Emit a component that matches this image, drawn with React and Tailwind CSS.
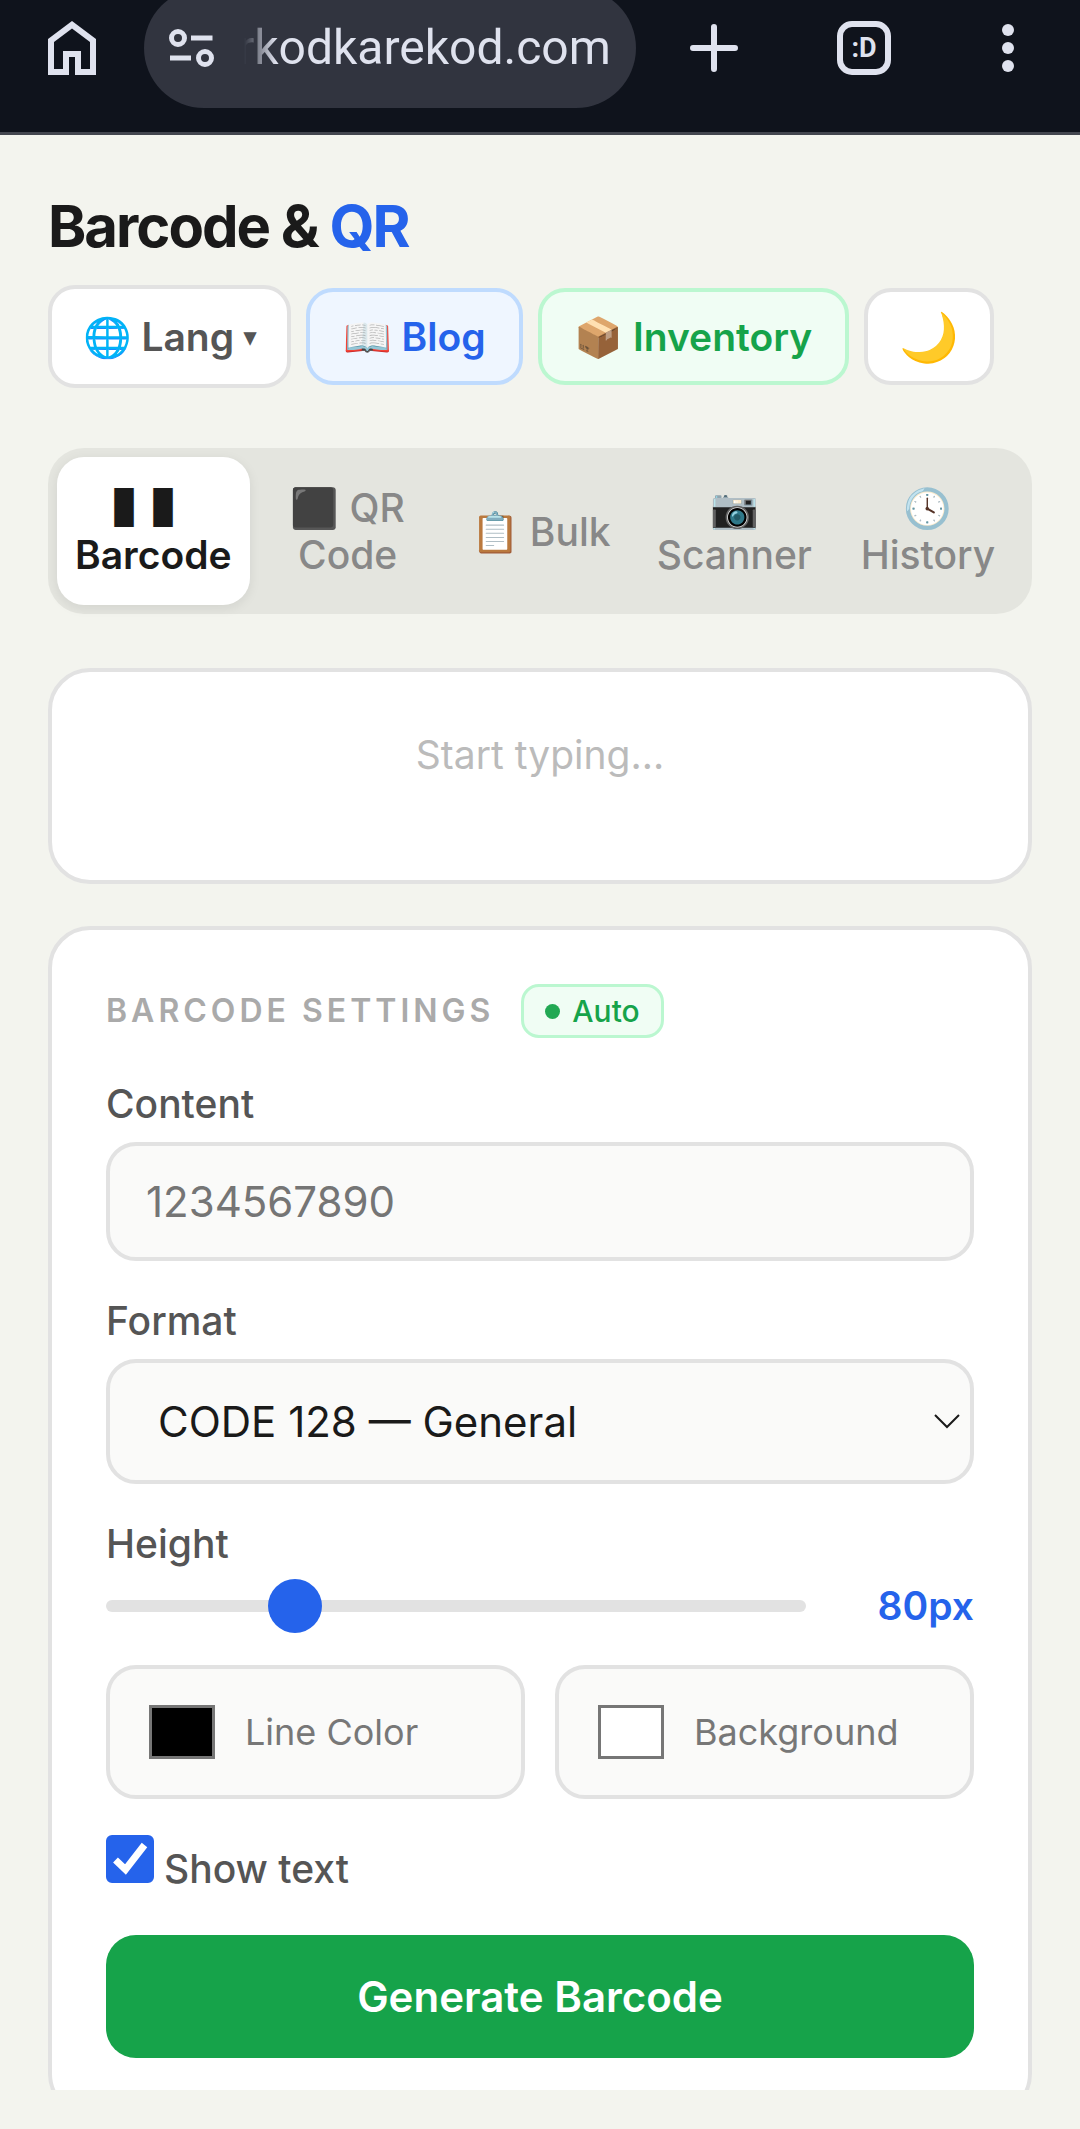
import React, { useState } from 'react';

const BrowserBar = () => (
  <header className="shrink-0 h-[135px] flex items-center pl-12 pr-[66px] pb-9 overflow-hidden bg-[#0f131c] border-b-[3px] border-[#43464f] text-[#dfe2ee]">
    <button type="button" aria-label="Home">
      <svg className="block w-12 h-[54px]" viewBox="0 0 48 54" fill="currentColor" fillRule="evenodd">
        <path d="M0 18L24 0L48 18V54H27V36H21V54H0ZM6 21V48H15V30H33V48H42V21L24 7.5Z" />
      </svg>
    </button>
    <div className="flex flex-1 items-center min-w-0 h-[120px] shrink-0 ml-12 pl-[25px] pr-[26px] rounded-full bg-[#31343f]">
      <svg className="shrink-0 w-[45px] h-[38px]" viewBox="0 0 45 38" fill="none" stroke="currentColor" strokeWidth="5">
        <circle cx="9" cy="9" r="6.5" />
        <path d="M22 9H43.5M1 29H22" />
        <circle cx="36" cy="29" r="6.5" />
      </svg>
      <input
        aria-label="Address"
        readOnly
        value="rkodkarekod.com"
        className="flex-1 min-w-0 ml-6 bg-transparent outline-none text-right text-[48px] leading-[60px] font-[Roboto,sans-serif] [mask-image:linear-gradient(to_right,transparent_6px,black_38px)]"
      />
    </div>
    <button type="button" aria-label="New tab" className="ml-[54px]">
      <svg className="block size-12" viewBox="0 0 48 48" stroke="currentColor" strokeWidth="6" strokeLinecap="round">
        <path d="M24 3V45M3 24H45" />
      </svg>
    </button>
    <button
      type="button"
      className="ml-[99px] size-[54px] flex items-center justify-center border-[6px] border-current rounded-[15px] text-[27px] leading-none font-bold font-[Roboto,sans-serif]"
    >
      :D
    </button>
    <button type="button" aria-label="Menu" className="ml-[111px]">
      <svg className="block w-3 h-12" viewBox="0 0 12 48" fill="currentColor">
        <circle cx="6" cy="6" r="6" />
        <circle cx="6" cy="24" r="6" />
        <circle cx="6" cy="42" r="6" />
      </svg>
    </button>
  </header>
);

const tabs = [
  { id: 'barcode', label: '▌▌ Barcode' },
  { id: 'qr', label: '⬛ QR Code' },
  { id: 'bulk', label: '📋 Bulk' },
  { id: 'scanner', label: '📷 Scanner' },
  { id: 'history', label: '🕓 History' },
];

const Tabs = ({ active, onChange }) => (
  <nav className="mt-[60px] flex gap-[3px] p-[9px] rounded-[36px] bg-[#e4e5df]">
    {tabs.map((tab) => (
      <button
        key={tab.id}
        type="button"
        onClick={() => onChange(tab.id)}
        className={
          tab.id === active
            ? 'flex-1 px-[18px] py-[27px] rounded-[27px] bg-white shadow-[0_3px_12px_rgba(0,0,0,0.08)] text-[39px] leading-[47px] font-semibold text-[#1a1a1a]'
            : 'flex-1 px-[18px] py-[27px] rounded-[27px] text-[39px] leading-[47px] font-medium text-[#888]'
        }
      >
        {tab.label}
      </button>
    ))}
  </nav>
);

const ColorField = ({ id, label, value, onChange }) => (
  <div className="flex flex-1 items-center gap-[30px] h-[134px] px-[39px] border-4 border-[#e2e2e2] rounded-[30px] bg-[#fafaf9]">
    <input
      id={id}
      type="color"
      value={value}
      onChange={(e) => onChange(e.target.value)}
      className="w-[66px] h-[54px] appearance-none bg-transparent [&::-webkit-color-swatch-wrapper]:p-0 [&::-webkit-color-swatch]:border-[3px] [&::-webkit-color-swatch]:border-[#767676] [&::-webkit-color-swatch]:rounded-none"
    />
    <label htmlFor={id} className="text-[36px] leading-[48px] text-[#777]">{label}</label>
  </div>
);

const BarcodeSettings = () => {
  const [content, setContent] = useState('');
  const [format, setFormat] = useState('CODE128');
  const [height, setHeight] = useState(80);
  const [lineColor, setLineColor] = useState('#000000');
  const [background, setBackground] = useState('#ffffff');
  const [showText, setShowText] = useState(true);

  return (
    <section className="mt-[42px] p-[54px] border-4 border-[#e2e2e2] rounded-[42px] bg-white">
      <div className="flex items-center gap-[27px]">
        <h2 className="text-[32px] leading-[48px] font-semibold tracking-[4px] text-[#aaa]">BARCODE SETTINGS</h2>
        <span className="flex items-center gap-3 h-[54px] px-[21px] border-[3px] border-[#bbf7d0] rounded-[18px] bg-[#f0fdf4] text-[30px] font-medium text-[#16a34a]">
          <span className="size-[15px] rounded-full bg-[#22a853]" />
          Auto
        </span>
      </div>

      <label htmlFor="content" className="block mt-[42px] text-[39px] leading-[48px] font-medium text-[#555]">Content</label>
      <input
        id="content"
        type="text"
        placeholder="1234567890"
        value={content}
        onChange={(e) => setContent(e.target.value)}
        className="block w-full h-[119px] mt-3.5 px-9 border-4 border-[#e2e2e2] rounded-[30px] bg-[#fafaf9] text-[42px] text-[#1a1a1a] placeholder:text-[#757575]"
      />

      <label htmlFor="format" className="block mt-9 text-[39px] leading-[48px] font-medium text-[#555]">Format</label>
      <div className="relative mt-3.5">
        <select
          id="format"
          value={format}
          onChange={(e) => setFormat(e.target.value)}
          className="block w-full h-[125px] px-12 border-4 border-[#e2e2e2] rounded-[30px] bg-[#fafaf9] appearance-none text-[42px] text-[#1a1a1a]"
        >
          <option value="CODE128">CODE 128 — General</option>
          <option value="EAN13">EAN-13</option>
          <option value="CODE39">CODE 39</option>
        </select>
        <svg
          className="absolute right-3.5 top-[55px] w-[26px] h-[15px] pointer-events-none"
          viewBox="0 0 26 15"
          fill="none"
          stroke="#1a1a1a"
          strokeWidth="2"
        >
          <path d="M1 1L13 13L25 1" />
        </svg>
      </div>

      <label htmlFor="height" className="block mt-9 text-[39px] leading-[48px] font-medium text-[#555]">Height</label>
      <div className="flex items-center h-[54px] mt-[11px]">
        <input
          id="height"
          type="range"
          min="40"
          max="200"
          value={height}
          onChange={(e) => setHeight(Number(e.target.value))}
          className="flex-1 h-3 appearance-none rounded-full bg-[#e2e2e2] [&::-webkit-slider-thumb]:appearance-none [&::-webkit-slider-thumb]:size-[54px] [&::-webkit-slider-thumb]:rounded-full [&::-webkit-slider-thumb]:bg-[#2563eb]"
        />
        <output htmlFor="height" className="w-[168px] text-right text-[39px] leading-[48px] font-semibold text-[#2563eb]">
          {height}px
        </output>
      </div>

      <div className="flex gap-[30px] mt-8">
        <ColorField id="line-color" label="Line Color" value={lineColor} onChange={setLineColor} />
        <ColorField id="background" label="Background" value={background} onChange={setBackground} />
      </div>

      <div className="flex items-baseline gap-[10px] mt-9">
        <span className="relative flex items-baseline">
          <input
            id="show-text"
            type="checkbox"
            checked={showText}
            onChange={(e) => setShowText(e.target.checked)}
            className="peer size-12 appearance-none rounded-md border-[3px] border-[#767676] bg-white checked:border-[#2563eb] checked:bg-[#2563eb]"
          />
          <svg
            className="absolute inset-0 size-12 hidden peer-checked:block pointer-events-none"
            viewBox="0 0 48 48"
            fill="none"
            stroke="#fff"
            strokeWidth="7"
          >
            <path d="M9.5 25L19.5 34.5L38.5 10" />
          </svg>
        </span>
        <label htmlFor="show-text" className="text-[39px] leading-[48px] font-medium text-[#555]">Show text</label>
      </div>

      <button type="button" className="block w-full h-[123px] mt-[42px] rounded-[30px] bg-[#16a34a] text-[42px] font-semibold text-white">
        Generate Barcode
      </button>
    </section>
  );
};

const App = () => {
  const [tab, setTab] = useState('barcode');

  return (
    <div className="h-screen flex flex-col bg-[#f3f4ee] font-[Inter,'Noto_Sans_CJK_JP','Noto_Color_Emoji',sans-serif]">
      <BrowserBar />
      <main className="flex-1 min-h-0 overflow-hidden px-12 pt-[61px]">
        <h1 className="text-[58px] leading-[60px] font-bold tracking-[-2px] text-[#1a1a1a]">
          Barcode & <span className="text-[#2563eb]">QR</span>
        </h1>
        <div className="flex items-center gap-[15px] mt-[29px] text-[39px] leading-[47px] font-semibold">
          <button type="button" className="flex items-center gap-[10px] h-[103px] px-[31px] border-4 border-[#e2e2e2] rounded-[27px] bg-white text-[#555]">
            🌐 Lang <span className="text-[24px] leading-6">▾</span>
          </button>
          <a href="#blog" className="flex items-center h-[97px] px-[33px] border-4 border-[#bfdbfe] rounded-[27px] bg-[#eff6ff] text-[#2563eb]">
            📖 Blog
          </a>
          <a href="#inventory" className="flex items-center h-[97px] px-[33px] border-4 border-[#bbf7d0] rounded-[27px] bg-[#f0fdf4] text-[#16a34a]">
            📦 Inventory
          </a>
          <button type="button" aria-label="Dark mode" className="h-[97px] px-[31px] border-4 border-[#e2e2e2] rounded-[27px] bg-white text-[48px]">
            🌙
          </button>
        </div>

        <Tabs active={tab} onChange={setTab} />

        <section className="mt-[54px] h-[216px] flex justify-center pt-[59px] border-4 border-[#e2e2e2] rounded-[42px] bg-white">
          <p className="text-[39px] leading-[48px] text-[#bbb]">Start typing...</p>
        </section>

        <BarcodeSettings />
      </main>
      <div className="shrink-0 h-[39px]" />
    </div>
  );
};

export default App;
